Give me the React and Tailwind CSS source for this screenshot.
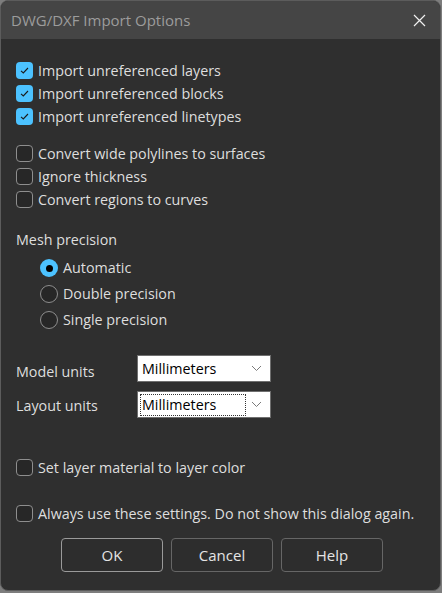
import React from "react";

const font = { fontFamily: '"Segoe UI", "Open Sans", "Noto Sans", sans-serif' };

function Check({ checked, label }) {
  return (
    <div className="flex items-center h-[23px]">
      <span
        className={`w-[17px] h-[17px] rounded-[4px] flex items-center justify-center ${
          checked ? "bg-[#4cc2ff]" : "border border-[#8e8e8e] bg-[#272727]"
        }`}
      >
        {checked && (
          <svg width="11" height="11" viewBox="0 0 11 11">
            <path d="M2 5.8 L4.3 8 L9 3" fill="none" stroke="#1b1b1b" strokeWidth="1.1" />
          </svg>
        )}
      </span>
      <span className="ml-[5px] text-[14.3px] text-[#dedede]">{label}</span>
    </div>
  );
}

function Radio({ checked, label }) {
  return (
    <div className="flex items-center h-[26px]">
      <span
        className={`w-[18px] h-[18px] rounded-full flex items-center justify-center ${
          checked ? "bg-[#4cc2ff]" : "border border-[#8e8e8e] bg-[#272727]"
        }`}
      >
        {checked && <span className="w-[7px] h-[7px] rounded-full bg-black" />}
      </span>
      <span className="ml-[5px] text-[14.3px] text-[#dedede]">{label}</span>
    </div>
  );
}

function Select({ value, focused }) {
  return (
    <div className="w-[134px] h-[27px] bg-white border border-[#6f6f6f] flex items-center pl-[2px] pr-[8px]">
      <span
        className={`text-[14.3px] text-black leading-[20px] px-[1px] ${
          focused ? "border border-dotted border-[#333] w-[106px]" : "border border-transparent"
        }`}
      >
        {value}
      </span>
      <svg className="ml-auto" width="11" height="7" viewBox="0 0 11 7">
        <path d="M1 1 L5.5 5.5 L10 1" fill="none" stroke="#7a7a7a" strokeWidth="1" />
      </svg>
    </div>
  );
}

function Button({ children, primary }) {
  return (
    <button
      className={`w-[102px] h-[34px] rounded-[4px] border text-[15px] text-[#e4e4e4] bg-[#2d2d2d] ${
        primary ? "border-[#9a9a9a]" : "border-[#666]"
      }`}
    >
      {children}
    </button>
  );
}

export default function App() {
  return (
    <div className="w-[442px] h-[593px] bg-[#7d7d7d]" style={font}>
      <div className="w-[441px] h-[591px] rounded-[8px] border border-[#5c5c5c] bg-[#2f2f2f] overflow-hidden flex flex-col">
        <div className="h-[38px] bg-[#454545] flex items-center pl-[10px] pr-[14px] shrink-0">
          <span className="text-[15px] text-[#9c9c9c]">DWG/DXF Import Options</span>
          <svg className="ml-auto" width="13" height="13" viewBox="0 0 13 13">
            <path d="M1 1 L12 12 M12 1 L1 12" stroke="#f0f0f0" strokeWidth="1.2" />
          </svg>
        </div>
        <div className="flex flex-col pl-[15px] pt-[20px]">
          <Check checked label="Import unreferenced layers" />
          <Check checked label="Import unreferenced blocks" />
          <Check checked label="Import unreferenced linetypes" />
          <div className="mt-[14px]">
            <Check label="Convert wide polylines to surfaces" />
            <Check label="Ignore thickness" />
            <Check label="Convert regions to curves" />
          </div>
          <div className="mt-[19px] h-[20px] flex items-center text-[14.3px] text-[#dedede]">
            Mesh precision
          </div>
          <div className="mt-[5px] pl-[24px]">
            <Radio checked label="Automatic" />
            <Radio label="Double precision" />
            <Radio label="Single precision" />
          </div>
          <div className="mt-[22px] flex items-center">
            <span className="w-[121px] pt-[6px] text-[14.3px] text-[#dedede]">Model units</span>
            <Select value="Millimeters" />
          </div>
          <div className="mt-[9px] flex items-center">
            <span className="w-[121px] pt-[2px] text-[14.3px] text-[#dedede]">Layout units</span>
            <Select value="Millimeters" focused />
          </div>
          <div className="mt-[38px]">
            <Check label="Set layer material to layer color" />
          </div>
          <div className="mt-[23px]">
            <Check label="Always use these settings. Do not show this dialog again." />
          </div>
          <div className="mt-[13px] flex gap-[8px] pl-[45px]">
            <Button primary>OK</Button>
            <Button>Cancel</Button>
            <Button>Help</Button>
          </div>
        </div>
      </div>
    </div>
  );
}
